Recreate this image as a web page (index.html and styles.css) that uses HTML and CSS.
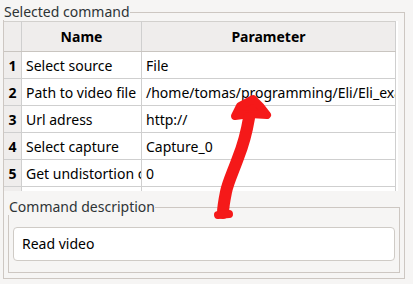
FILE: index.html
```html
<!DOCTYPE html>
<html lang="en">
<head>
    <meta charset="UTF-8">
    <title>Selected command</title>
    <link rel="stylesheet" href="styles.css">
</head>
<body>
    <div class="group outer">
        <div class="group-head">
            <span class="group-title">Selected command</span>
            <span class="group-rule"></span>
        </div>
        <div class="group-body">
            <div class="table-view">
                <table class="params">
                    <thead>
                        <tr>
                            <th class="num"></th>
                            <th class="col-name">Name</th>
                            <th class="col-param">Parameter</th>
                        </tr>
                    </thead>
                    <tbody>
                        <tr><th class="num">1</th><td>Select source</td><td>File</td></tr>
                        <tr><th class="num">2</th><td>Path to video file</td><td>/home/tomas/programming/Eli/Eli_examples/video.avi</td></tr>
                        <tr><th class="num">3</th><td>Url adress</td><td>http://</td></tr>
                        <tr><th class="num">4</th><td>Select capture</td><td>Capture_0</td></tr>
                        <tr><th class="num">5</th><td>Get undistortion coefficients</td><td>0</td></tr>
                        <tr class="cut"><th class="num"></th><td></td><td></td></tr>
                    </tbody>
                </table>
            </div>

            <div class="group inner">
                <div class="group-head">
                    <span class="group-title">Command description</span>
                    <span class="group-rule"></span>
                </div>
                <div class="group-body">
                    <div class="desc-box">Read video</div>
                </div>
            </div>
        </div>
    </div>

    <!-- red marker drawn over the screenshot -->
    <svg class="marker" width="413" height="284" viewBox="0 0 413 284">
        <path d="M253 99 L260 106 L267 115 L250 114 L235 116 L240 106 Z"
              fill="#f51919" stroke="#f51919" stroke-width="8" stroke-linejoin="round"/>
        <path d="M249 118 C246 136 242 148 238 158 C233 172 228 182 226 192 C224 202 223 208 223 213"
              fill="none" stroke="#f51919" stroke-width="12" stroke-linecap="round"/>
        <path d="M218 215 L229 214" fill="none" stroke="#f51919" stroke-width="8" stroke-linecap="round"/>
    </svg>
</body>
</html>
```

FILE: styles.css
```css
body {
    margin: 0;
    background: #f6f5f4;
    font-family: 'Noto Sans', sans-serif;
    font-size: 14px;
    color: #2e3436;
    position: relative;
    width: 413px;
    height: 284px;
    overflow: hidden;
}
.group {
    display: flex;
    flex-direction: column;
}
.group.outer {
    margin: 4px 8px 0 3px;
    height: 275px;
}
.group-head {
    display: flex;
    height: 16px;
}
.group-title {
    line-height: 16px;
    padding-left: 1px;
    white-space: nowrap;
}
.group-rule {
    flex: 1;
    margin-top: 8px;
    border-top: 1px solid #cdc7c2;
    border-right: 1px solid #cdc7c2;
}
.group-body {
    flex: 1;
    border: 1px solid #cdc7c2;
    border-top: none;
}
.outer > .group-body {
    padding: 1px 0 4px 0;
}
.table-view {
    width: 394px;
    height: 170px;
    overflow: hidden;
    background: #ffffff;
}
table.params {
    width: 392px;
    border-collapse: collapse;
    table-layout: fixed;
    color: #000;
}
.params th, .params td {
    height: 26px;
    padding: 0 4px;
    border: 1px solid #cfcfcf;
    white-space: nowrap;
    overflow: hidden;
    text-align: left;
}
.params thead th {
    height: 29px;
    background: #efedec;
    text-align: center;
    font-weight: bold;
    border-top-color: #d2d0cd;
    border-bottom: 1px solid #c9c5c0;
}
.params th.num {
    width: 9px;
    padding: 0 4px;
    background: #efedec;
    text-align: center;
    font-weight: bold;
    border-left: none;
}
.params .col-name {
    width: 111px;
}
.params td {
    text-overflow: clip;
}
.group.inner {
    margin: 8px 4px 0 4px;
    flex: 1;
}
.inner > .group-body {
    padding: 12px 4px 11px 4px;
}
.desc-box {
    height: 32px;
    line-height: 32px;
    padding: 0 8px;
    background: #ffffff;
    border: 1px solid #cfcbc6;
    border-radius: 4px;
    color: #000;
}
.marker {
    position: absolute;
    left: 0;
    top: 0;
    pointer-events: none;
}
```
